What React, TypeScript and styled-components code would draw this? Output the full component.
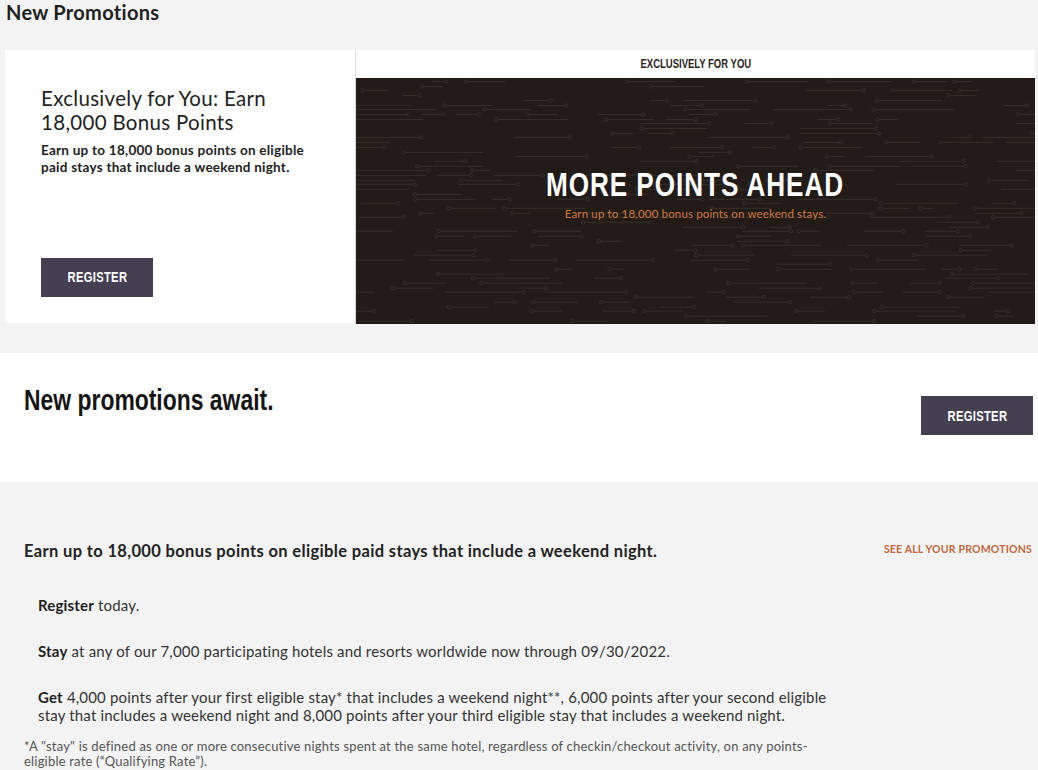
import React from 'react';
import styled, { createGlobalStyle } from 'styled-components';

const GlobalStyle = createGlobalStyle`
  html, body {
    margin: 0;
    padding: 0;
    background: #f3f3f3;
  }
  body {
    font-family: Lato, "Open Sans", sans-serif;
    color: #1d1d1d;
    -webkit-font-smoothing: antialiased;
  }
  * { box-sizing: border-box; }
`;

// Bold grotesque squeezed to a condensed cut for the display lettering.
const Condensed = styled.span<{ $origin?: string; $squeeze?: number }>`
  display: inline-block;
  font-family: "Liberation Sans", Arimo, Arial, sans-serif;
  font-weight: 700;
  white-space: nowrap;
  transform: scaleX(${(p) => p.$squeeze ?? 0.79});
  transform-origin: ${(p) => p.$origin ?? 'center'};
`;

const Page = styled.div`
  width: 1038px;
  overflow: hidden;
`;

const PageTitle = styled.h2`
  margin: 0 0 0 6px;
  font-size: 20px;
  line-height: 24px;
  font-weight: 700;
  letter-spacing: 0.3px;
  color: #1f1f1f;
`;

const Card = styled.section`
  margin: 26px 3px 0 5px;
  height: 273px;
  display: grid;
  grid-template-columns: 350px 1fr;
  background: #fff;
`;

const Intro = styled.div`
  display: flex;
  flex-direction: column;
  padding: 36px 30px 27px 36px;
`;

const IntroTitle = styled.h3`
  margin: 0;
  font-size: 20.5px;
  line-height: 24px;
  font-weight: 400;
  letter-spacing: 0.3px;
  color: #222;
`;

const IntroText = styled.p`
  margin: 8px 0 0;
  font-size: 13.5px;
  line-height: 17px;
  font-weight: 700;
  letter-spacing: 0.25px;
  color: #222;
`;

const Button = styled.button`
  width: 112px;
  height: 39px;
  border: 0;
  padding: 0;
  background: #443f51;
  color: #fff;
  font-size: 14px;
  letter-spacing: 0.4px;
  cursor: pointer;
`;

const IntroButton = styled(Button)`
  margin-top: auto;
`;

const Banner = styled.div`
  display: flex;
  flex-direction: column;
  border-left: 1px solid #dcdcdc;
`;

const BannerTag = styled.div`
  height: 28px;
  display: flex;
  align-items: center;
  justify-content: center;
  font-size: 12.5px;
  color: #2a2420;
  background: #fff;
`;

const Art = styled.div`
  flex: 1;
  display: grid;
  background: #221b18;
  overflow: hidden;
  & > * {
    grid-area: 1 / 1;
  }
`;

const ArtCopy = styled.div`
  display: flex;
  flex-direction: column;
  align-items: center;
  justify-content: center;
  padding-bottom: 16px;
`;

const ArtHeadline = styled.div`
  font-size: 33.5px;
  line-height: 36px;
  letter-spacing: 1.2px;
  color: #fff;
`;

const ArtSub = styled.div`
  margin-top: 4px;
  font-size: 11.5px;
  letter-spacing: 0.15px;
  color: #d27a43;
`;

const PromoBand = styled.section`
  margin-top: 30px;
  height: 129px;
  background: #fff;
  display: flex;
  justify-content: space-between;
  align-items: flex-start;
  padding: 29px 5px 0 24px;
`;

const BandTitle = styled.h2`
  margin: 0;
  font-size: 29px;
  line-height: 34px;
  color: #151515;
`;

const BandButton = styled(Button)`
  margin-top: 14px;
`;

const Details = styled.section`
  padding: 59px 6px 0 24px;
`;

const DetailsHead = styled.div`
  display: flex;
  justify-content: space-between;
  align-items: flex-start;
`;

const DetailsTitle = styled.h3`
  margin: 0;
  font-size: 16.5px;
  line-height: 20px;
  font-weight: 700;
  letter-spacing: 0.35px;
  color: #222;
`;

const SeeAll = styled.a`
  margin-top: 2px;
  font-size: 10.5px;
  font-weight: 700;
  letter-spacing: 0.2px;
  color: #c2673d;
  text-decoration: none;
  cursor: pointer;
`;

const Steps = styled.div`
  display: flex;
  flex-direction: column;
  gap: 28px;
  padding: 35px 0 0 14px;
`;

const Step = styled.p`
  margin: 0;
  font-size: 15px;
  line-height: 18px;
  letter-spacing: 0.18px;
  color: #333;
  max-width: 805px;
  b {
    font-weight: 700;
    color: #1f1f1f;
  }
`;

const Footnote = styled.p`
  margin: 15px 0 0;
  font-size: 13px;
  line-height: 15px;
  letter-spacing: 0.2px;
  color: #555;
  max-width: 812px;
`;

// Faint "connector" texture: short rules with small rings at one end.
function makeRng(seed: number) {
  let s = seed;
  return () => {
    s |= 0;
    s = (s + 0x6d2b79f5) | 0;
    let t = Math.imul(s ^ (s >>> 15), 1 | s);
    t = (t + Math.imul(t ^ (t >>> 7), 61 | t)) ^ t;
    return ((t ^ (t >>> 14)) >>> 0) / 4294967296;
  };
}

type Seg = { x1: number; x2: number; y: number; cx: number };

const ART_W = 680;
const ART_H = 246;

const segments: Seg[] = (() => {
  const r = makeRng(20220930);
  const out: Seg[] = [];
  for (let y = 3; y < ART_H; y += 4.7) {
    let x = -20 + r() * 30;
    while (x < ART_W) {
      const len = 10 + r() * 70;
      if (r() < 0.45) {
        const atStart = r() < 0.5;
        out.push({ x1: x, x2: x + len, y: Math.round(y) + 0.5, cx: atStart ? x - 2 : x + len + 2 });
      }
      x += len + 8 + r() * 45;
    }
  }
  return out;
})();

const ConnectorTexture = () => (
  <svg width="100%" height="100%" viewBox={`0 0 ${ART_W} ${ART_H}`} preserveAspectRatio="none">
    <g stroke="#372f2b" strokeWidth="1" fill="none">
      {segments.map((s, i) => (
        <React.Fragment key={i}>
          <line x1={s.x1} y1={s.y} x2={s.x2} y2={s.y} />
          <circle cx={s.cx} cy={s.y} r={1.7} />
        </React.Fragment>
      ))}
    </g>
  </svg>
);

export default function App() {
  return (
    <Page>
      <GlobalStyle />
      <PageTitle>New Promotions</PageTitle>

      <Card>
        <Intro>
          <IntroTitle>
            Exclusively for You: Earn
            <br />
            18,000 Bonus Points
          </IntroTitle>
          <IntroText>
            Earn up to 18,000 bonus points on eligible paid stays that include a weekend night.
          </IntroText>
          <IntroButton>
            <Condensed $squeeze={0.8}>REGISTER</Condensed>
          </IntroButton>
        </Intro>
        <Banner>
          <BannerTag>
            <Condensed $squeeze={0.76}>EXCLUSIVELY FOR YOU</Condensed>
          </BannerTag>
          <Art>
            <ConnectorTexture />
            <ArtCopy>
              <ArtHeadline>
                <Condensed $squeeze={0.78}>MORE POINTS AHEAD</Condensed>
              </ArtHeadline>
              <ArtSub>Earn up to 18,000 bonus points on weekend stays.</ArtSub>
            </ArtCopy>
          </Art>
        </Banner>
      </Card>

      <PromoBand>
        <BandTitle>
          <Condensed $origin="left">New promotions await.</Condensed>
        </BandTitle>
        <BandButton>
          <Condensed $squeeze={0.8}>REGISTER</Condensed>
        </BandButton>
      </PromoBand>

      <Details>
        <DetailsHead>
          <DetailsTitle>
            Earn up to 18,000 bonus points on eligible paid stays that include a weekend night.
          </DetailsTitle>
          <SeeAll>SEE ALL YOUR PROMOTIONS</SeeAll>
        </DetailsHead>
        <Steps>
          <Step>
            <b>Register</b> today.
          </Step>
          <Step>
            <b>Stay</b> at any of our 7,000 participating hotels and resorts worldwide now through 09/30/2022.
          </Step>
          <Step>
            <b>Get</b> 4,000 points after your first eligible stay* that includes a weekend night**, 6,000
            points after your second eligible stay that includes a weekend night and 8,000 points after your
            third eligible stay that includes a weekend night.
          </Step>
        </Steps>
        <Footnote>
          *A "stay" is defined as one or more consecutive nights spent at the same hotel, regardless of
          checkin/checkout activity, on any points-eligible rate (“Qualifying Rate”).
        </Footnote>
      </Details>
    </Page>
  );
}
